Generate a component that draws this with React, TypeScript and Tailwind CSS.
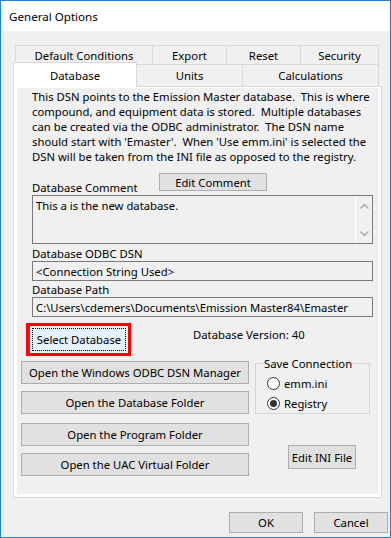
import React from "react";

function Btn({ className = "", children }: { className?: string; children: React.ReactNode }) {
  return (
    <div
      className={
        "flex items-center justify-center bg-[#e1e1e1] border border-[#adadad] whitespace-nowrap " +
        className
      }
    >
      {children}
    </div>
  );
}

function Radio({ checked, label }: { checked?: boolean; label: string }) {
  return (
    <div className="flex items-center h-[20px] pl-[11px] gap-[4px]">
      <div className="w-[13px] h-[13px] rounded-full border border-[#333333] bg-white flex items-center justify-center">
        {checked && <div className="w-[7px] h-[7px] rounded-full bg-[#333333]" />}
      </div>
      <span>{label}</span>
    </div>
  );
}

function Chevron({ up }: { up?: boolean }) {
  return (
    <svg width="9" height="6" viewBox="0 0 9 6" className="block">
      <path
        d={up ? "M0.5 5.5 L4.5 1.5 L8.5 5.5" : "M0.5 0.5 L4.5 4.5 L8.5 0.5"}
        fill="none"
        stroke="#a6a6a6"
        strokeWidth="1.3"
      />
    </svg>
  );
}

export default function App() {
  const lines = [
    "This DSN points to the Emission Master database.  This is where",
    "compound, and equipment data is stored.  Multiple databases",
    "can be created via the ODBC administrator.  The DSN name",
    "should start with 'Emaster'.  When 'Use emm.ini' is selected the",
    "DSN will be taken from the INI file as opposed to the registry.",
  ];
  return (
    <div className="w-[391px] h-[538px] border border-[#1a83d6] bg-[#f0f0f0] flex flex-col text-[11.3px] leading-[15px] text-black font-['Noto_Sans',sans-serif] overflow-hidden">
      {/* title bar */}
      <div className="h-[30px] shrink-0 bg-white flex items-center pl-[8px] text-[11.6px]">General Options</div>

      <div className="pt-[14px] pl-[12px]">
        {/* tab row 1 */}
        <div className="flex h-[19px] ml-[2px]">
          <div className="w-[137px] border-l border-t border-[#d9d9d9] flex items-center justify-center">
            Default Conditions
          </div>
          <div className="w-[74px] border-l border-t border-[#d9d9d9] flex items-center justify-center">Export</div>
          <div className="w-[74px] border-l border-t border-[#d9d9d9] flex items-center justify-center">Reset</div>
          <div className="w-[79px] border-l border-t border-r border-[#d9d9d9] flex items-center justify-center">
            Security
          </div>
        </div>
        {/* tab row 2 */}
        <div className="flex h-[22px]">
          <div className="relative z-10 -mt-[2px] h-[25px] w-[124px] bg-white border-l border-t border-r border-[#d9d9d9] flex items-start justify-center pt-[5px]">
            Database
          </div>
          <div className="w-[106px] border-t border-r border-[#d9d9d9] flex items-center justify-center">Units</div>
          <div className="w-[136px] border-t border-r border-[#d9d9d9] flex items-center justify-center">
            Calculations
          </div>
        </div>

        {/* panel */}
        <div className="w-[369px] h-[412px] border border-[#d9d9d9] bg-white px-[3px] pt-[1px] pb-[3px]">
          <div className="h-full bg-[#f0f0f0] flex flex-col">
            <div className="pl-[15px] pt-[1px] whitespace-pre">
              {lines.map((l, i) => (
                <div key={i}>{l}</div>
              ))}
            </div>

            {/* comment row */}
            <div className="flex h-[22px] mt-[9px] pl-[15px]">
              <div className="w-[127px] self-end">Database Comment</div>
              <Btn className="w-[108px] h-[18px]">Edit Comment</Btn>
            </div>
            <div className="ml-[15px] w-[341px] h-[49px] border border-[#7a7a7a] flex">
              <div className="flex-1 pl-[3px] pt-[2px]">This a is the new database.</div>
              <div className="w-[17px] border-l border-white flex flex-col items-center justify-between pt-[7px] pb-[6px]">
                <Chevron up />
                <Chevron />
              </div>
            </div>

            <div className="pl-[15px] mt-[2px]">Database ODBC DSN</div>
            <div className="ml-[15px] w-[341px] h-[20px] border border-[#7a7a7a] flex items-center pl-[3px]">
              &lt;Connection String Used&gt;
            </div>
            <div className="pl-[15px] mt-[1px]">Database Path</div>
            <div className="ml-[15px] w-[341px] h-[20px] border border-[#7a7a7a] flex items-center pl-[3px] whitespace-nowrap">
              C:\Users\cdemers\Documents\Emission Master84\Emaster
            </div>

            {/* select database row */}
            <div className="flex mt-[6px]">
              <div className="ml-[9px] w-[105px] h-[33px] border-[3px] border-[#ff0000]">
                <div className="h-full bg-[#e5f1fb] border-l border-[#0078d7] p-[2px]">
                  <div className="h-full border border-dotted border-black flex items-center justify-center">
                    Select Database
                  </div>
                </div>
              </div>
              <div className="ml-[62px] mt-[4px]">Database Version: 40</div>
            </div>

            {/* lower area */}
            <div className="flex pl-[4px]">
              <div className="w-[228px] flex flex-col mt-[5px]">
                <Btn className="h-[23px]">Open the Windows ODBC DSN Manager</Btn>
                <Btn className="h-[23px] mt-[7px]">Open the Database Folder</Btn>
                <Btn className="h-[23px] mt-[9px]">Open the Program Folder</Btn>
                <Btn className="h-[23px] mt-[7px]">Open the UAC Virtual Folder</Btn>
              </div>
              <div className="ml-[6px] flex flex-col">
                <fieldset className="w-[115px] border border-[#d5d5d5] pt-[2px] pb-0">
                  <legend className="ml-[7px] px-[1px]">Save Connection</legend>
                  <Radio label="emm.ini" />
                  <Radio checked label="Registry" />
                </fieldset>
                <Btn className="ml-[33px] mt-[31px] w-[68px] h-[24px]">Edit INI File</Btn>
              </div>
            </div>
          </div>
        </div>
      </div>

      {/* bottom buttons */}
      <div className="flex justify-end pr-[2px] mt-[14px] gap-[11px]">
        <Btn className="w-[74px] h-[21px]">OK</Btn>
        <Btn className="w-[74px] h-[21px]">Cancel</Btn>
      </div>
    </div>
  );
}
